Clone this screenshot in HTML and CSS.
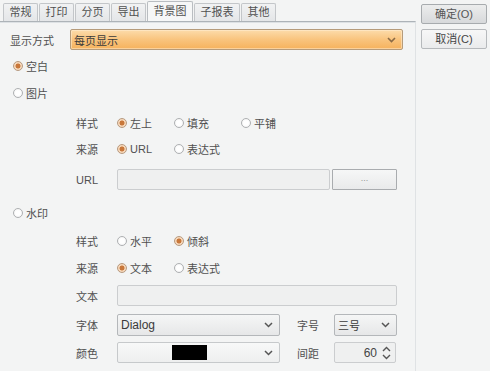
FILE: index.html
```html
<!DOCTYPE html>
<html lang="zh">
<head>
<meta charset="utf-8">
<link rel="stylesheet" href="styles.css">
</head>
<body>
<div class="dialog">
  <div class="main">
    <div class="tabs">
      <div class="tab">常规</div>
      <div class="tab">打印</div>
      <div class="tab">分页</div>
      <div class="tab">导出</div>
      <div class="tab active">背景图</div>
      <div class="tab">子报表</div>
      <div class="tab">其他</div>
    </div>
    <div class="panel">
      <div class="row r-mode">
        <span class="lbl-mode">显示方式</span>
        <div class="combo orange">
          <span class="combo-text">每页显示</span>
          <svg class="chev" width="9" height="6" viewBox="0 0 9 6"><polyline points="1,1 4.5,4.5 8,1" fill="none" stroke="#8a6a45" stroke-width="1.6"/></svg>
        </div>
      </div>

      <div class="row top-radio r-blank">
        <span class="radio checked"></span><span class="rtext">空白</span>
      </div>
      <div class="row top-radio r-pic">
        <span class="radio"></span><span class="rtext">图片</span>
      </div>

      <div class="row sub r-style1">
        <span class="lbl">样式</span>
        <span class="opt w1"><span class="radio checked"></span><span class="rtext">左上</span></span>
        <span class="opt w2"><span class="radio"></span><span class="rtext">填充</span></span>
        <span class="opt"><span class="radio"></span><span class="rtext">平铺</span></span>
      </div>
      <div class="row sub r-src1">
        <span class="lbl">来源</span>
        <span class="opt w1"><span class="radio checked"></span><span class="rtext">URL</span></span>
        <span class="opt"><span class="radio"></span><span class="rtext">表达式</span></span>
      </div>
      <div class="row sub r-url">
        <span class="lbl">URL</span>
        <div class="field w-url"></div>
        <div class="btn-dots">...</div>
      </div>

      <div class="row top-radio r-wm">
        <span class="radio"></span><span class="rtext">水印</span>
      </div>

      <div class="row sub r-style2">
        <span class="lbl">样式</span>
        <span class="opt w1"><span class="radio"></span><span class="rtext">水平</span></span>
        <span class="opt"><span class="radio checked"></span><span class="rtext">倾斜</span></span>
      </div>
      <div class="row sub r-src2">
        <span class="lbl">来源</span>
        <span class="opt w1"><span class="radio checked"></span><span class="rtext">文本</span></span>
        <span class="opt"><span class="radio"></span><span class="rtext">表达式</span></span>
      </div>
      <div class="row sub r-text">
        <span class="lbl">文本</span>
        <div class="field w-full"></div>
      </div>
      <div class="row sub r-font">
        <span class="lbl">字体</span>
        <div class="combo gray w-font">
          <span class="combo-text latin">Dialog</span>
          <svg class="chev" width="9" height="6" viewBox="0 0 9 6"><polyline points="1,1 4.5,4.5 8,1" fill="none" stroke="#555" stroke-width="1.5"/></svg>
        </div>
        <span class="lbl2">字号</span>
        <div class="combo gray w-size">
          <span class="combo-text">三号</span>
          <svg class="chev" width="9" height="6" viewBox="0 0 9 6"><polyline points="1,1 4.5,4.5 8,1" fill="none" stroke="#555" stroke-width="1.5"/></svg>
        </div>
      </div>
      <div class="row sub r-color">
        <span class="lbl">颜色</span>
        <div class="combo light w-font">
          <span class="swatch-area"><span class="swatch"></span></span>
          <svg class="chev" width="9" height="6" viewBox="0 0 9 6"><polyline points="1,1 4.5,4.5 8,1" fill="none" stroke="#555" stroke-width="1.5"/></svg>
        </div>
        <span class="lbl2">间距</span>
        <div class="spinner">
          <span class="spin-val">60</span>
          <svg class="spin-arrows" width="9" height="14" viewBox="0 0 9 14"><polyline points="1,5 4.5,1.5 8,5" fill="none" stroke="#555" stroke-width="1.4"/><polyline points="1,9 4.5,12.5 8,9" fill="none" stroke="#555" stroke-width="1.4"/></svg>
        </div>
      </div>
    </div>
  </div>
  <div class="buttons">
    <div class="btn btn-ok">确定(O)</div>
    <div class="btn btn-cancel">取消(C)</div>
  </div>
</div>
</body>
</html>
```
FILE: styles.css
```css
* { box-sizing: border-box; }
html, body {
  margin: 0;
  padding: 0;
  background: #f3f4f4;
}
body {
  font-family: "Liberation Sans", "Noto Sans CJK SC", sans-serif;
  font-size: 11px;
  color: #505050;
  width: 490px;
  height: 371px;
  overflow: hidden;
}
.dialog {
  display: flex;
  align-items: flex-start;
}
.main {
  width: 416px;
}
.tabs {
  display: flex;
  align-items: flex-end;
  gap: 1px;
  height: 21px;
  padding-left: 3px;
}
.tab {
  height: 18px;
  padding: 0 5.5px;
  border: 1px solid #c3c6c9;
  border-bottom: none;
  border-radius: 2px 2px 0 0;
  background: linear-gradient(#f1f2f3, #e4e6e8);
  color: #505050;
  line-height: 16px;
  text-align: center;
}
.tab.active {
  height: 20px;
  background: #f6f7f7;
  border-color: #b9bdc1;
  line-height: 19px;
}
.panel {
  border-top: 1px solid #adb3b8;
  border-right: 1px solid #dfe2e4;
  box-shadow: inset 0 1px 0 #dde1e4;
  height: 350px;
  display: flex;
  flex-direction: column;
}
.row {
  display: flex;
  align-items: center;
  height: 20px;
  flex: none;
}
.r-mode { margin-top: 7px; height: 21px; padding-left: 10px; }
.r-blank { margin-top: 6px; }
.r-pic { margin-top: 7px; }
.r-style1 { margin-top: 10px; }
.r-src1 { margin-top: 6px; }
.r-url { margin-top: 10px; height: 21px; }
.r-wm { margin-top: 13px; }
.r-style2 { margin-top: 8px; }
.r-src2 { margin-top: 7px; }
.r-text { margin-top: 7px; height: 21px; }
.r-font { margin-top: 8px; height: 22px; }
.r-color { margin-top: 6px; height: 21px; }

.lbl-mode { width: 60px; }
.top-radio { padding-left: 13px; }
.sub { padding-left: 76px; }
.lbl { width: 41px; }
.lbl2 { width: 37px; margin-left: 17px; }
.opt { display: flex; align-items: center; }
.opt.w1 { width: 57px; }
.opt.w2 { width: 67px; }
.rtext { margin-left: 3px; }

.radio {
  width: 10px;
  height: 10px;
  border-radius: 50%;
  border: 1px solid #aeb0b2;
  background: radial-gradient(circle, #ffffff 40%, #eceded 100%);
  flex: none;
}
.radio.checked {
  border-color: #b79a80;
  background: radial-gradient(circle, #c8773a 0 2.2px, #f6d7b9 2.8px 100%);
}

.combo {
  position: relative;
  height: 100%;
  display: flex;
  align-items: center;
  border-radius: 2px;
}
.combo .chev {
  position: absolute;
  right: 6px;
  top: 50%;
  margin-top: -3px;
}
.combo-text { padding-left: 3px; color: #3a3a3a; }
.combo-text.latin { font-size: 12px; }
.orange {
  width: 333px;
  border: 1px solid #b59b7b;
  background: linear-gradient(#fcdcab, #f9c47e 50%, #f6b25d);
  box-shadow: inset 0 0 0 1px rgba(255, 240, 215, 0.5);
}
.gray {
  border: 1px solid #b4b7ba;
  background: linear-gradient(#f5f6f6, #e6e7e8);
}
.light {
  border: 1px solid #c6c9cb;
  background: linear-gradient(#f7f8f8, #eeefef);
}
.w-font { width: 163px; }
.w-size { width: 63px; }
.swatch-area {
  width: 142px;
  display: flex;
  justify-content: center;
}
.swatch {
  width: 35px;
  height: 15px;
  background: #000;
}
.field {
  height: 100%;
  border: 1px solid #cbcdcf;
  border-radius: 2px;
  background: #eff0f0;
}
.w-url { width: 213px; }
.w-full { width: 280px; }
.btn-dots {
  width: 65px;
  height: 100%;
  margin-left: 2px;
  border: 1px solid #a9acaf;
  border-radius: 1px;
  background: linear-gradient(#f6f7f7, #e9eaeb);
  color: #999;
  font-size: 9px;
  text-align: center;
  line-height: 17px;
}
.spinner {
  width: 62px;
  height: 100%;
  border: 1px solid #cbcdcf;
  border-radius: 2px;
  background: #eff0f0;
  display: flex;
  align-items: center;
  justify-content: flex-end;
  padding-right: 4px;
  font-size: 12px;
  color: #444;
}
.spin-val { margin-right: 5px; }

.buttons {
  margin-left: 5px;
  padding-top: 4px;
  display: flex;
  flex-direction: column;
  gap: 5px;
}
.btn {
  width: 66px;
  height: 20px;
  border-radius: 2px;
  text-align: center;
  line-height: 18px;
  color: #555;
}
.btn-ok {
  border: 1px solid #a7abae;
  background: linear-gradient(#eceded, #d7d9db);
}
.btn-cancel {
  border: 1px solid #b6b9bc;
  background: linear-gradient(#f7f7f7, #eaebec);
  color: #444;
}
```
